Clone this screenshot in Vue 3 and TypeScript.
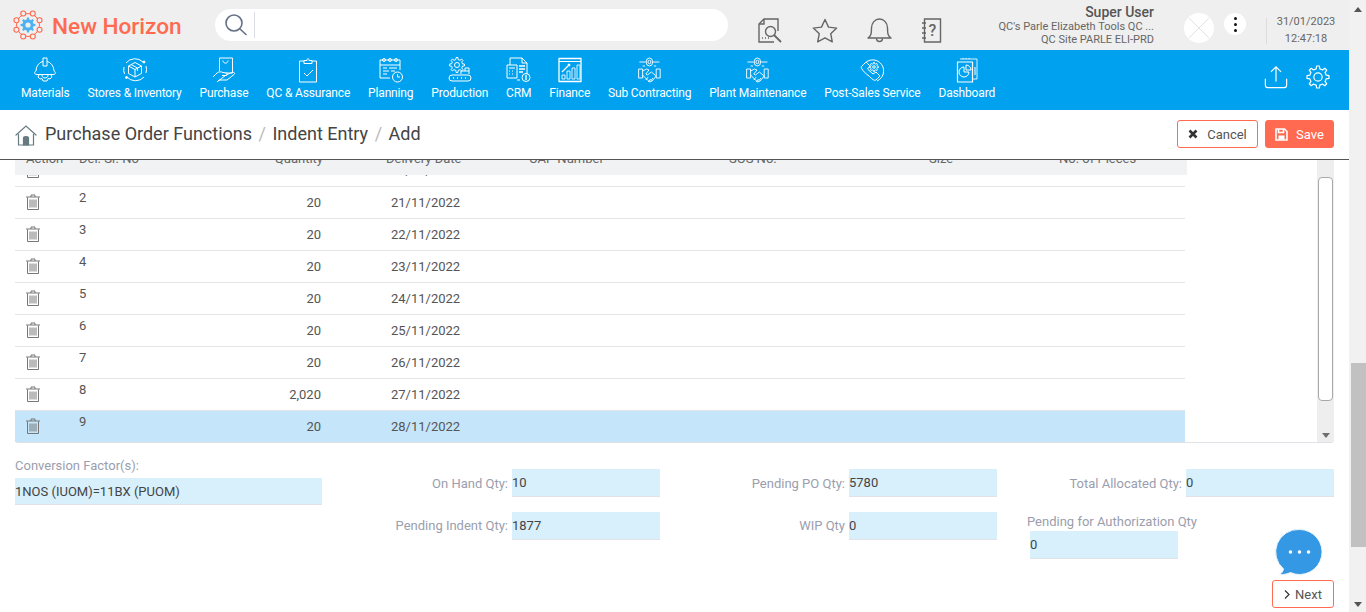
<template>
  <div class="shell">
    <div class="page">
      <header class="topbar">
        <div class="logo">
          <svg width="32" height="32" viewBox="0 0 32 32" fill="none">
            <circle cx="16" cy="16" r="11.5" stroke="#ff6a50" stroke-width="1" />
            <circle
              v-for="d in logoDots"
              :key="d.x"
              :cx="d.x"
              :cy="d.y"
              r="2.5"
              fill="#efefef"
              stroke="#ff6a50"
              stroke-width="1.1"
            />
            <path :d="logoGear" fill="#4eb2f0" />
            <circle cx="16" cy="16" r="2.6" fill="#efefef" />
          </svg>
          <span class="logo-text">New Horizon</span>
        </div>
        <div class="search">
          <svg width="24" height="24" viewBox="0 0 24 24" fill="none" stroke="#667085" stroke-width="1.6">
            <circle cx="10" cy="10" r="8" />
            <path d="M16 16l6 5.5" stroke-linecap="round" />
          </svg>
          <span class="search-sep"></span>
        </div>
        <div class="tools">
          <svg width="25" height="25" viewBox="0 0 25 25" fill="none" stroke="#666" stroke-width="1.4">
            <path d="M20 13V1H6L1 6v18h15" />
            <path d="M1 6h5V1" />
            <circle cx="12.5" cy="13.5" r="5" />
            <path d="M16 17l7 7" stroke-width="1.8" />
            <path d="M4 20h1M7 20h1M10 20h1" />
          </svg>
          <svg width="26" height="25" viewBox="0 0 26 25" fill="none" stroke="#666" stroke-width="1.4">
            <path d="M13 1.5l3.5 7.6 8.2 1-6 5.6 1.6 8.1-7.3-4-7.3 4 1.6-8.1-6-5.6 8.2-1z" stroke-linejoin="round" />
          </svg>
          <svg width="25" height="25" viewBox="0 0 25 25" fill="none" stroke="#666" stroke-width="1.4">
            <path d="M1 20c3-2 3.500-4 3.500-10C4.500 5 8 1 12.500 1s8 4 8 9c0 6 .5 8 3.500 10z" stroke-linejoin="round" />
            <path d="M9.500 20.500c0 4 6 4 6 0" />
          </svg>
          <svg width="21" height="25" viewBox="0 0 21 25" fill="none" stroke="#666" stroke-width="1.4">
            <path d="M3.500 1h16v23h-16z" />
            <path d="M1 5h4M1 10h4M1 15h4M1 20h4" />
            <text x="7.500" y="18" font-size="16" font-weight="500" fill="#666" stroke="none" font-family="Roboto, sans-serif">?</text>
          </svg>
        </div>
        <div class="user">
          <div class="user-name">Super User</div>
          <div class="user-line">QC's Parle Elizabeth Tools QC ...</div>
          <div class="user-line">QC Site PARLE ELI-PRD</div>
        </div>
        <div class="avatar">
          <svg width="30" height="30" viewBox="0 0 30 30" stroke="#e2e2e2" stroke-width="1">
            <path d="M5 5l20 20M25 5L5 25" />
          </svg>
        </div>
        <div class="kebab"><i></i><i></i><i></i></div>
        <div class="clock">
          <div class="clock-text">
            <div>31/01/2023</div>
            <div>12:47:18</div>
          </div>
        </div>
      </header>

      <nav class="menu">
        <div class="menu-items">
          <a v-for="m in menu" :key="m.label" class="menu-item">
            <span class="menu-icon" v-html="m.icon"></span>
            <span>{{ m.label }}</span>
          </a>
        </div>
        <div class="menu-tools">
          <svg width="24" height="24" viewBox="0 0 26 26" fill="none" stroke="#fff" stroke-width="1.3">
            <path d="M13 2v16M7.500 7.500L13 2l5.500 5.500" />
            <path d="M1.500 15v7c0 1.500 1 2.500 2.500 2.500h18c1.500 0 2.500-1 2.500-2.500v-7" />
          </svg>
          <svg width="24" height="24" viewBox="0 0 26 26" fill="none" stroke="#fff" stroke-width="1.3">
            <path :d="settingsGear" stroke-linejoin="round" />
            <circle cx="13" cy="13" r="4.500" />
          </svg>
        </div>
      </nav>

      <section class="crumbs">
        <svg width="22" height="22" viewBox="0 0 22 22" fill="none" stroke="#667a80" stroke-width="1.2">
          <path d="M1 11L11 2l10 9" stroke-linecap="round" />
          <path d="M3.500 10v11h15V10" />
          <path d="M8.500 21v-7c0-1 1-1.500 2.500-1.500s2.500.5 2.500 1.500v7z" fill="#667a80" />
        </svg>
        <span class="crumb">Purchase Order Functions</span>
        <span class="slash">/</span>
        <span class="crumb">Indent Entry</span>
        <span class="slash">/</span>
        <span class="crumb">Add</span>
        <div class="actions">
          <button class="btn btn-outline btn-cancel">
            <svg width="10" height="10" viewBox="0 0 10 10" stroke="#333" stroke-width="2.600">
              <path d="M1.500 1.500l7 7M8.500 1.500l-7 7" />
            </svg>
            Cancel
          </button>
          <button class="btn btn-fill">
            <svg width="13" height="13" viewBox="0 0 13 13" fill="none" stroke="#fff" stroke-width="1.600">
              <path d="M1 1h8.500L12 3.500V12H1z" />
              <path d="M3.500 1v3.500h5V1" />
              <rect x="3.500" y="7.500" width="6" height="4" fill="#fff" stroke="none" />
            </svg>
            Save
          </button>
        </div>
      </section>

      <section class="panel">
        <div class="grid">
          <div class="grid-head">
            <div class="head-row">
              <span class="c-action">Action</span>
              <span class="c-no">Del. Sr. No</span>
              <span class="c-qty">Quantity</span>
              <span class="c-date">Delivery Date</span>
              <span class="c-cap">CAP Number</span>
              <span class="c-sos">SOS No.</span>
              <span class="c-size">Size</span>
              <span class="c-pcs">No. of Pieces</span>
            </div>
          </div>
          <div class="grid-body">
            <div v-for="r in rows" :key="r.no" class="row" :class="{ active: r.no === 9 }">
              <span class="c-action">
                <svg class="trash" width="14" height="16" viewBox="0 0 14 16" fill="none" stroke="#777" stroke-width="1">
                  <path d="M0 3h14M5 3V1h4v2" />
                  <path d="M1.500 3.500v12h11v-12" />
                  <path d="M4 5.500v8M6 5.500v8M8 5.500v8M10 5.500v8" />
                </svg>
              </span>
              <span class="c-no no-cell">{{ r.no }}</span>
              <span class="c-qty">{{ r.qty }}</span>
              <span class="c-date date-cell">{{ r.date }}</span>
            </div>
          </div>
        </div>
        <div class="vscroll">
          <div class="vthumb"></div>
          <div class="varrow"></div>
        </div>
      </section>

      <section class="fields">
        <div class="conv">
          <label>Conversion Factor(s):</label>
          <div class="value">1NOS (IUOM)=11BX (PUOM)</div>
        </div>
        <div class="field first"><label>On Hand Qty:</label><div class="value">10</div></div>
        <div class="field first"><label>Pending PO Qty:</label><div class="value">5780</div></div>
        <div class="field first"><label>Total Allocated Qty:</label><div class="value">0</div></div>
        <div class="field"><label>Pending Indent Qty:</label><div class="value">1877</div></div>
        <div class="field"><label>WIP Qty</label><div class="value">0</div></div>
        <div class="stacked">
          <label>Pending for Authorization Qty</label>
          <div class="value">0</div>
        </div>
      </section>

      <div class="footer">
        <button class="btn btn-outline btn-next">
          <svg width="6" height="9" viewBox="0 0 6 9" fill="none" stroke="#333" stroke-width="1.200"><path d="M1 .5l4 4-4 4" /></svg>
          Next
        </button>
      </div>

      <div class="chat">
        <svg width="50" height="50" viewBox="0 0 50 50">
          <path d="M25.500 2.500a22.500 22.500 0 1 1-9 43.100C13 47 9 48 5.500 47.500c2-1 3.500-3 4-5.500A22.500 22.500 0 0 1 25.500 2.500z" fill="#3498e4" stroke="#eef4fb" stroke-width="1" />
          <circle cx="16.500" cy="25" r="1.800" fill="#fff" />
          <circle cx="25.500" cy="25" r="1.800" fill="#fff" />
          <circle cx="34.500" cy="25" r="1.800" fill="#fff" />
        </svg>
      </div>
    </div>

    <aside class="page-scroll">
      <div class="arrow-up"></div>
      <div class="page-thumb"></div>
      <div class="arrow-down"></div>
    </aside>
  </div>
</template>

<script setup lang="ts">
// builds a toothed outline around a centre
function gear(cx: number, cy: number, outer: number, inner: number, teeth: number): string {
  const pts: string[] = []
  const step = (Math.PI * 2) / teeth
  for (let i = 0; i < teeth; i++) {
    const a = i * step
    const corners: [number, number][] = [
      [inner, a - step * 0.5],
      [inner, a - step * 0.28],
      [outer, a - step * 0.16],
      [outer, a + step * 0.16],
      [inner, a + step * 0.28],
    ]
    for (const [r, t] of corners) {
      pts.push(`${(cx + r * Math.cos(t)).toFixed(2)} ${(cy + r * Math.sin(t)).toFixed(2)}`)
    }
  }
  return `M${pts.join('L')}Z`
}

const logoGear = gear(16, 16, 7.5, 5.6, 8)
const settingsGear = gear(13, 13, 12, 9, 8)
const logoDots = Array.from({ length: 8 }, (_, i) => {
  const a = (i * Math.PI) / 4 + Math.PI / 8
  return { x: 16 + 12.5 * Math.cos(a), y: 16 + 12.5 * Math.sin(a) }
})

const svg = (w: number, body: string) =>
  `<svg width="${w}" height="26" viewBox="0 0 ${w} 26" fill="none" stroke="#fff" stroke-width="1" stroke-linejoin="round">${body}</svg>`

// handshake under a small gear, drawn wide and squeezed to the icon box
const shake = `<g transform="scale(.8 1)"><path d="M2 12h5v9H2zM24 12h5v9h-5z"/><path d="M7 14l5-2 3 1-4 4 2 1 5-3 6 4-5 5-3 1-3-2-6-5"/><path d="M11 23l3-3M14 25l3-3M17 24l3-3"/><circle cx="15.500" cy="5" r="4"/><circle cx="15.500" cy="5" r="1.800"/><path d="M3 5h8M20 5h8M10 9H7M21 9h3"/></g>`

const menu = [
  {
    label: 'Materials',
    icon: svg(24, `<path d="M3 14a9.500 10 0 0 1 7-9.700M14 4.300a9.500 10 0 0 1 7 9.700"/><path d="M10 1h4v8h-4z"/><path d="M3 14c-2 1-2 3.500 1 3.500h16c3 0 3-2.500 1-3.500"/><path d="M6 18l-1 2 2 2 2-.5 1 2.500h4l1-2.500 2 .5 2-2-1-2"/><path d="M9 18c0 4 6 4 6 0"/>`),
  },
  {
    label: 'Stores & Inventory',
    icon: svg(24, `<path d="M20 5A11.500 11.500 0 0 0 3 6M4 20a11.500 11.500 0 0 0 17 0M1 10a11.500 11.500 0 0 0 .5 7M23 9a11.500 11.500 0 0 1 0 7"/><path d="M12 5.500l6.500 3.500v7.500L12 20l-6.500-3.500V9zM5.500 9l6.500 3.500L18.500 9M12 12.500V20M8 7.500l6.500 3.500v3"/><circle cx="21" cy="5" r="1" fill="#fff"/><circle cx="3.500" cy="20.500" r="1" fill="#fff"/>`),
  },
  {
    label: 'Purchase',
    icon: svg(24, `<path d="M7.500 14V1h13v15h-7"/><path d="M11 3.500c0 3.500 5 3.500 5 0"/><path d="M1 20l4-4c2-1.500 4-1.500 6-.5l3 .5c2 0 2 2.500 0 2.500h-4"/><path d="M14 18l6-2.500c2-1 3.500 1 2 2L15 23H7l-2 2z"/>`),
  },
  {
    label: 'QC & Assurance',
    icon: svg(20, `<path d="M6 4H1.500v21h17V4H14"/><path d="M6 6.500V3.500h3C9 1 11 1 11 3.500h3v3z"/><path d="M6 16l3 3 6-6"/>`),
  },
  {
    label: 'Planning',
    icon: svg(24, `<path d="M11 21H1V3h20v10"/><path d="M1 8h20"/><circle cx="5" cy="3" r="1.500"/><circle cx="11" cy="3" r="1.500"/><circle cx="17" cy="3" r="1.500"/><path d="M4 11h4M10 11h8M4 14h6M12 14h4M4 17h4"/><circle cx="18.500" cy="20" r="5"/><path d="M18.500 17v3h2.500"/>`),
  },
  {
    label: 'Production',
    icon: svg(24, `<path d="${gear(9, 8, 7.500, 5.500, 8)}"/><circle cx="9" cy="8" r="2.500"/><path d="M13 17v-3h4v-3h4v6M17 14h4"/><rect x="1" y="18" width="22" height="6" rx="3"/><path d="M5 21h1M9 21h1M13 21h1M17 21h1" stroke-width="1.400"/>`),
  },
  {
    label: 'CRM',
    icon: svg(25, `<path d="M4 8V1h12l5 5v11"/><path d="M16 1v5h5"/><path d="M1 8h10v13H1z"/><path d="M3 11h6M3 14h1M6 14h1M3 17h1M6 17h1"/><path d="M13 9h6M13 12h6M13 15h4" stroke-width="1.300"/><path d="M11 23h3"/><circle cx="20" cy="20.500" r="4"/><path d="M20 18v5" stroke-width="1.300"/>`),
  },
  {
    label: 'Finance',
    icon: svg(24, `<rect x="1" y="1.500" width="22" height="23" stroke-width="1.300"/><path d="M1 4.500h22"/><path d="M4 22v-4h3v4zM9 22v-8h3v8zM14 22V11h3v11zM19 22V8h3v14z" opacity=".85"/><path d="M4 15l6-6" stroke-width="1.200"/><circle cx="11" cy="8" r="1" fill="#fff"/>`),
  },
  { label: 'Sub Contracting', icon: svg(25, shake) },
  { label: 'Plant Maintenance', icon: svg(25, shake) },
  {
    label: 'Post-Sales Service',
    icon: svg(24, `<path d="M5 6a11 11 0 1 1 12 18"/><path d="M2 9l4-4 4 4-2.500 3 5.500 5 3-2 4 4-4 4c-2 1-4-1-7-4-3-2-6-5-7-7-1-1-1-2 0-3z"/><path d="${gear(14, 10, 4.500, 3.300, 8)}"/><circle cx="14" cy="10" r="1.300"/>`),
  },
  {
    label: 'Dashboard',
    icon: svg(22, `<path d="M4 2h17v20h-4" opacity=".85"/><path d="M7 2V1M10 2V1M13 2V1"/><rect x="1.500" y="5" width="15" height="20" stroke-width="1.200"/><path d="M8 10a5 5 0 1 0 5 5H8z"/><path d="M10 8a5 5 0 0 1 5 5h-5z"/><path d="M19 10v8"/>`),
  },
]

const dates = ['20', '21', '22', '23', '24', '25', '26', '27', '28']
const rows = dates.map((d, i) => ({
  no: i + 1,
  qty: i === 7 ? '2,020' : '20',
  date: `${d}/11/2022`,
}))
</script>

<style>
html,
body {
  margin: 0;
  overflow: hidden;
  background: #fff;
}
</style>

<style scoped>
.shell {
  display: flex;
  height: 612px;
  font-family: Roboto, 'Liberation Sans', sans-serif;
  color: #555;
}

.page {
  position: relative;
  width: 1349px;
  flex-shrink: 0;
}

/* top bar */
.topbar {
  display: flex;
  align-items: flex-start;
  height: 50px;
  background: #efefef;
}

.logo {
  display: flex;
  align-items: center;
  width: 215px;
  height: 50px;
  padding-left: 12px;
  box-sizing: border-box;
}

.logo-text {
  margin: 2px 0 0 8px;
  font-size: 22.600px;
  font-weight: 500;
  color: #ff6a50;
  white-space: nowrap;
}

.search {
  display: flex;
  align-items: center;
  width: 513px;
  height: 32px;
  margin-top: 9px;
  padding-left: 9px;
  box-sizing: border-box;
  background: #fff;
  border-radius: 16px;
}

.search-sep {
  width: 1px;
  height: 26px;
  margin-left: 6px;
  background: #dcdce6;
}

.tools {
  display: flex;
  align-items: center;
  margin: 18px 0 0 30px;
}

.tools svg:nth-child(-n + 3) {
  margin-right: 29px;
}

.user {
  width: 212px;
  padding-top: 4px;
  text-align: right;
}

.user-name {
  font-size: 14px;
  line-height: 16px;
  font-weight: 500;
  color: #555;
}

.user-line {
  font-size: 11px;
  line-height: 13px;
  color: #666;
}

.user-line:first-of-type {
  margin-top: 2px;
}

.avatar {
  width: 30px;
  height: 30px;
  margin: 13px 0 0 30px;
  border-radius: 50%;
  background: #fff;
}

.kebab {
  display: flex;
  flex-direction: column;
  align-items: center;
  justify-content: center;
  gap: 3px;
  width: 22px;
  height: 22px;
  margin: 13px 0 0 10px;
  border-radius: 50%;
  background: #fff;
}

.kebab i {
  width: 3px;
  height: 3px;
  background: #111;
  border-radius: 50%;
}

.clock {
  width: 78px;
  height: 26px;
  margin: 18px 0 0 20px;
  border-left: 1px solid #dcdcdc;
  font-size: 11px;
  line-height: 17px;
  text-align: center;
  color: #666;
}

.clock-text {
  margin-top: -5px;
}

/* blue menu */
.menu {
  display: flex;
  justify-content: space-between;
  height: 60px;
  background: #00a2f0;
}

.menu-items {
  display: flex;
  gap: 17.900px;
  padding: 7px 0 0 21px;
}

.menu-item {
  display: flex;
  flex-direction: column;
  align-items: center;
  font-size: 12px;
  letter-spacing: -0.15px;
  line-height: 16px;
  color: #fff;
  white-space: nowrap;
}

.menu-icon {
  height: 26px;
  margin-bottom: 2px;
  line-height: 0;
}

.menu-tools {
  display: flex;
  gap: 18px;
  padding: 15px 19px 0 0;
}

/* breadcrumb */
.crumbs {
  display: flex;
  align-items: center;
  height: 49px;
  padding: 0 15px;
  border-bottom: 1px solid #555;
  background: #fff;
}

.crumb {
  margin-bottom: 2px;
  font-size: 18px;
  color: #444;
}

.crumbs > svg {
  margin-right: 8px;
}

.slash {
  margin: 0 6.500px 2px;
  font-size: 18px;
  color: #bbb;
}

.actions {
  display: flex;
  gap: 7px;
  margin-left: auto;
  margin-bottom: 1px;
}

.btn {
  display: flex;
  align-items: center;
  justify-content: center;
  gap: 8px;
  height: 28px;
  padding: 0;
  box-sizing: border-box;
  border: 1px solid #ff6a50;
  border-radius: 3px;
  font-family: inherit;
  font-size: 13px;
}

.btn-outline {
  width: 81px;
  background: #fff;
  color: #555;
}

.btn-cancel {
  gap: 9px;
}

.btn-fill {
  width: 69px;
  background: #ff6a50;
  color: #fff;
}

/* grid panel */
.panel {
  display: flex;
  height: 282px;
  margin: 0 15px;
  border-bottom: 1px solid #dfe1e6;
  border-radius: 0 0 3px 3px;
}

.grid {
  width: 1172px;
  display: flex;
  flex-direction: column;
  overflow: hidden;
}

.grid-head {
  height: 15px;
  flex-shrink: 0;
  overflow: hidden;
  background: #f1f2f4;
}

.head-row {
  display: flex;
  height: 20px;
  margin-top: -11px;
  line-height: 20px;
  font-size: 13px;
  color: #666;
}

.head-row .c-no {
  width: 124px;
}

.head-row .c-date {
  width: 206px;
  padding-left: 63px;
}

.grid-body {
  flex: 1;
  overflow: hidden;
}

.row {
  display: flex;
  align-items: center;
  width: 1170px;
  height: 32px;
  box-sizing: border-box;
  border-bottom: 1px solid #e2e4e8;
  font-size: 13px;
  color: #555;
}

.row:first-child {
  margin-top: -20px;
}

.row.active {
  padding-bottom: 1px;
  background: #c5e6fa;
  border-bottom: 0;
}

.trash {
  margin-top: -2px;
}

.c-action {
  width: 64px;
  flex-shrink: 0;
  padding-left: 11px;
  box-sizing: border-box;
  display: flex;
  align-items: center;
}

.c-no {
  width: 122px;
  flex-shrink: 0;
}

.no-cell {
  margin-top: -10px;
}

.c-qty {
  width: 120px;
  flex-shrink: 0;
  text-align: right;
}

.c-date {
  width: 208px;
  flex-shrink: 0;
  padding-left: 65px;
  box-sizing: border-box;
}

.date-cell {
  padding-left: 70px;
}

.c-cap,
.c-sos {
  width: 200px;
  flex-shrink: 0;
}

.c-size {
  width: 130px;
  flex-shrink: 0;
}

.c-pcs {
  white-space: nowrap;
}

.vscroll {
  display: flex;
  flex-direction: column;
  align-items: center;
  width: 17px;
  margin-left: auto;
  padding-top: 17px;
  box-sizing: border-box;
  background: #eee;
}

.vthumb {
  width: 13px;
  height: 222px;
  border: 1px solid #a9a9a9;
  border-radius: 4px;
  background: #fff;
}

.varrow {
  width: 0;
  height: 0;
  margin-top: 32px;
  border-left: 4.500px solid transparent;
  border-right: 4.500px solid transparent;
  border-top: 5px solid #6f6f6f;
}

/* qty fields */
.fields {
  display: grid;
  grid-template-columns: 307px 338px 337px 337px;
  row-gap: 15px;
  margin: 0 15px;
  padding-top: 16px;
}

.fields label {
  font-size: 13px;
  color: #9a9eae;
  white-space: nowrap;
}

.value {
  height: 28px;
  box-sizing: border-box;
  padding-top: 5px;
  line-height: 17px;
  background: #d8effc;
  border-bottom: 1px solid #dfe3e8;
  font-size: 13px;
  color: #444;
}

.conv {
  grid-row: span 2;
}

.conv label {
  display: block;
  height: 19px;
  line-height: 14px;
}

.conv .value {
  height: 27px;
}

.field {
  display: flex;
  justify-content: flex-end;
  align-items: flex-start;
  gap: 4px;
}

.field.first {
  margin-top: 10px;
}

.field .value {
  width: 148px;
  flex-shrink: 0;
}

.field label {
  padding-top: 5px;
  line-height: 17px;
}

.field.first label {
  padding-top: 6px;
}

.stacked {
  padding-left: 33px;
}

.stacked label {
  display: block;
  height: 19px;
  line-height: 19px;
  margin-left: -3px;
}

.stacked .value {
  width: 148px;
}

.footer {
  display: flex;
  justify-content: flex-end;
  margin: 21px 15px 0;
}

.btn-next {
  width: 62px;
  gap: 5px;
}

/* floating things */
.chat {
  position: absolute;
  left: 1274px;
  top: 527px;
  line-height: 0;
}

.page-scroll {
  display: flex;
  flex-direction: column;
  align-items: center;
  width: 17px;
  background: #f1f1f1;
}

.arrow-up {
  width: 0;
  height: 0;
  margin-top: 7px;
  border-left: 4.500px solid transparent;
  border-right: 4.500px solid transparent;
  border-bottom: 5px solid #555;
}

.page-thumb {
  width: 15px;
  height: 184px;
  margin-top: 351px;
  align-self: flex-end;
  background: #c1c1c1;
}

.arrow-down {
  width: 0;
  height: 0;
  margin-top: 55px;
  border-left: 4.500px solid transparent;
  border-right: 4.500px solid transparent;
  border-top: 5px solid #555;
}
</style>
